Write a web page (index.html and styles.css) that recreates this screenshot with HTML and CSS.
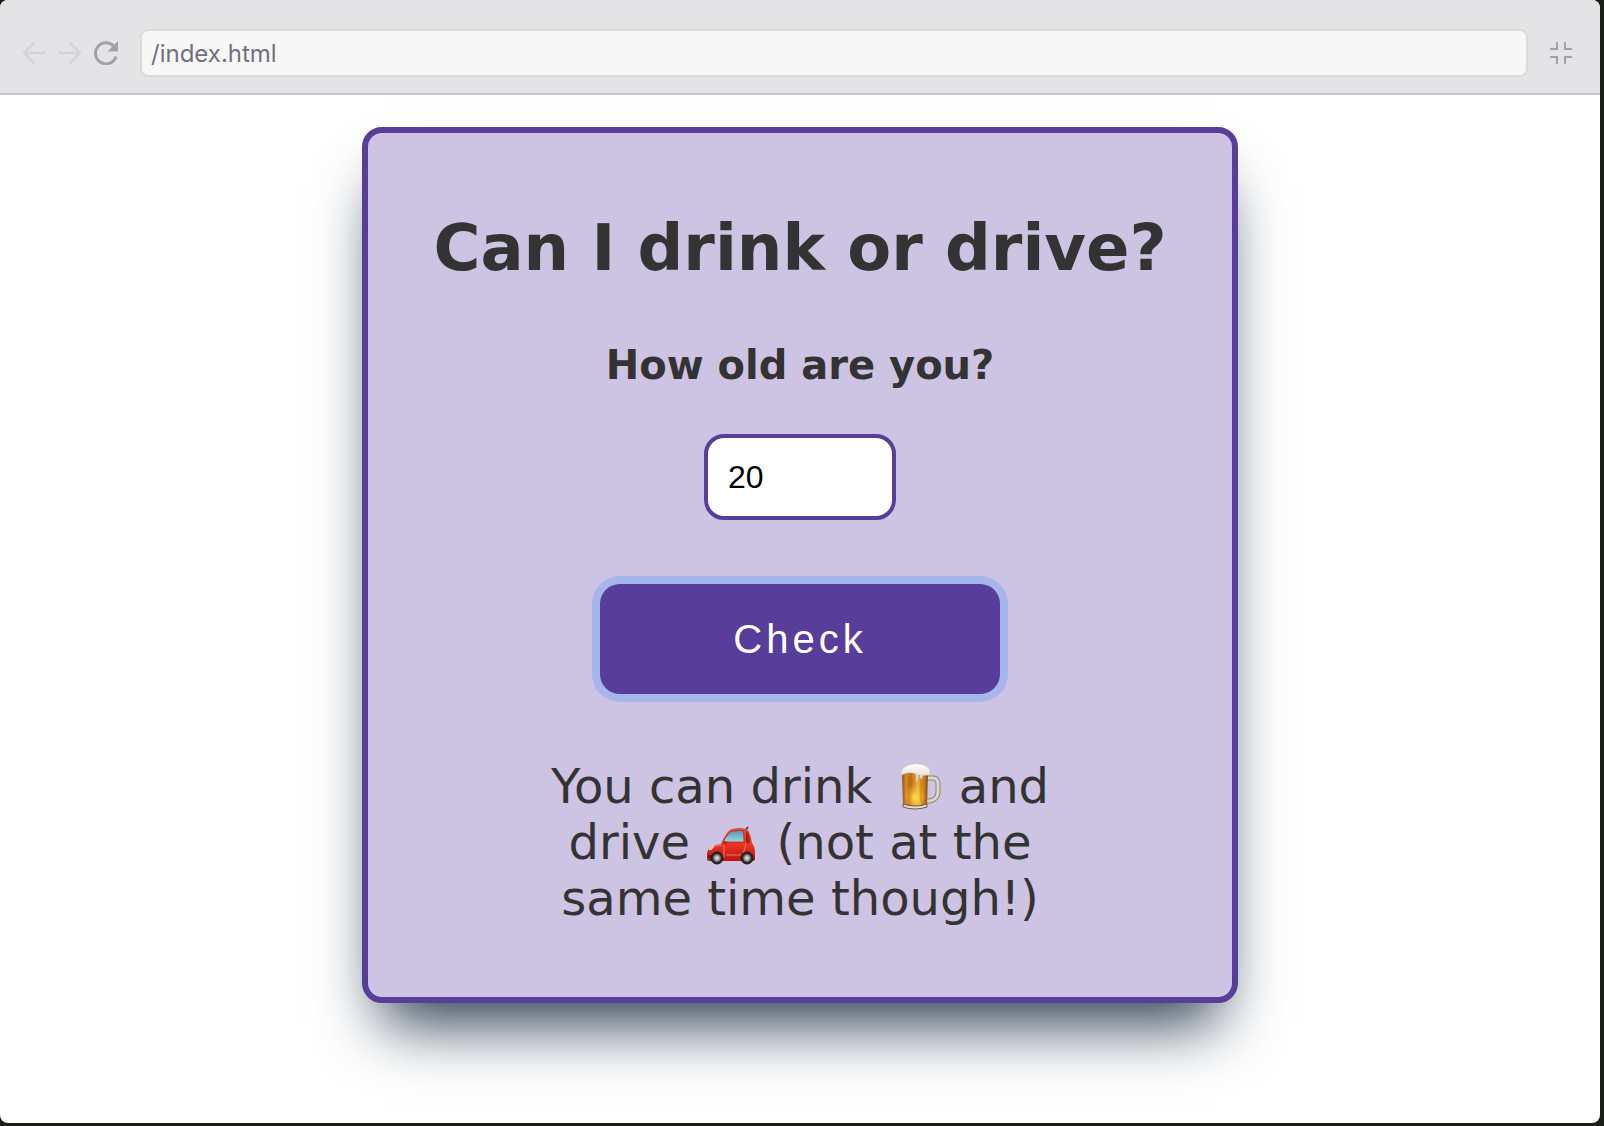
FILE: index.html
```html
<!DOCTYPE html>
<html lang="en">
<head>
  <meta charset="utf-8">
  <meta name="viewport" content="width=device-width, initial-scale=1">
  <title>Can I drink or drive?</title>
  <link rel="stylesheet" href="styles.css">
</head>
<body>
  <div class="window">
    <header class="toolbar">
      <div class="nav">
        <button class="icon-button faint" type="button" aria-label="Back">
          <svg width="24" height="24" viewBox="0 0 24 24" fill="none" stroke="currentColor" stroke-width="2.500"><path d="M24 12H2M12.500 1.500 2 12l10.500 10.500"/></svg>
        </button>
        <button class="icon-button faint" type="button" aria-label="Forward">
          <svg width="24" height="24" viewBox="0 0 24 24" fill="none" stroke="currentColor" stroke-width="2.500"><path d="M0 12h22M11.500 1.500 22 12 11.500 22.500"/></svg>
        </button>
        <button class="icon-button" type="button" aria-label="Reload">
          <svg width="24" height="24" viewBox="0 0 24 24"><path d="M19.500 5A10.500 10.500 0 1 0 22 15.500" fill="none" stroke="currentColor" stroke-width="3"/><path d="M24 0v10.500H13.500z" fill="currentColor"/></svg>
        </button>
      </div>
      <input class="address" type="text" value="/index.html" aria-label="Address">
      <button class="icon-button" type="button" aria-label="Exit full screen">
        <svg width="22" height="22" viewBox="0 0 22 22" fill="none" stroke="currentColor" stroke-width="2"><path d="M0 7h7V0M15 0v7h7M0 15h7v7M22 15h-7v7"/></svg>
      </button>
    </header>
    <main class="page">
      <form class="card">
        <h1 class="title">Can I drink or drive?</h1>
        <label class="question" for="age">How old are you?</label>
        <input class="age" id="age" type="text" inputmode="numeric" value="20">
        <button class="check" type="button">Check</button>
        <p class="result">You can drink
          <svg class="emoji" role="img" aria-label="beer" viewBox="-10 0 56 48">
            <defs>
              <linearGradient id="beer" x1="0" x2="1"><stop offset="0" stop-color="#8a5012"/><stop offset=".15" stop-color="#d88a26"/><stop offset=".35" stop-color="#b96c16"/><stop offset=".6" stop-color="#f0b23a"/><stop offset=".85" stop-color="#c97c1c"/><stop offset="1" stop-color="#7c4a14"/></linearGradient>
              <radialGradient id="glow" cy=".7"><stop offset="0" stop-color="#ffe04a"/><stop offset="1" stop-color="#ffc030" stop-opacity="0"/></radialGradient>
              <linearGradient id="foam" x2="0" y2="1"><stop offset="0" stop-color="#fff"/><stop offset="1" stop-color="#dcd3c6"/></linearGradient>
            </defs>
            <path d="M30 15h6q5 0 5 6v8q0 7-8 9h-3" fill="none" stroke="#8d8478" stroke-width="5"/>
            <path d="M30 15h6q5 0 5 6v8q0 7-8 9h-3" fill="none" stroke="#ddd6c8" stroke-width="3"/>
            <path d="M5 10h26l-1 33q-11 4-24 0z" fill="url(#beer)"/>
            <ellipse cx="18" cy="29" rx="11" ry="14" fill="url(#glow)"/>
            <path d="M12 13v26M24 13v26" stroke="#9b5a12" stroke-opacity=".4"/>
            <path d="M6 41q12 4 24 0v3q-12 4-24 0z" fill="#e8dfcf" stroke="#6e5a43"/>
            <path d="M4 9Q5 4 12 2q9-3 17 1 5 3 4 8-2 2-4 1-1 1-3 0l-1 3q-1 2-2 0v-3h-2v5q-1 3-2 0v-6Q11 8 5 12q-2-1-1-3z" fill="url(#foam)" stroke="#c6bbaa" stroke-width=".5"/>
          </svg>
          and drive
          <svg class="emoji" role="img" aria-label="car" viewBox="-2 -2 56 48">
            <defs>
              <linearGradient id="paint" x2="0" y2="1"><stop offset="0" stop-color="#f24a35"/><stop offset=".5" stop-color="#ed3325"/><stop offset="1" stop-color="#b81511"/></linearGradient>
              <linearGradient id="glass" x2="0" y2="1"><stop offset="0" stop-color="#5597ad"/><stop offset="1" stop-color="#9bd4df"/></linearGradient>
            </defs>
            <path d="m38 10 3-4" stroke="#333" stroke-width="1.500"/>
            <path d="M14 23Q20 9 25 8q8-2 14 0 4 1 6 14 3 4 3 10v6q0 2-3 2H2q-2 0-2-3v-5q1-7 14-9z" fill="url(#paint)"/>
            <path d="M16 21q5-10 10-11l10-1q1 4 1 12z" fill="url(#glass)" stroke="#9d2018" stroke-width=".7"/>
            <path d="M39 10q3 0 4 12h-4z" fill="#a92017"/>
            <path d="M17 22v15M39 22l-3 12H19M3 28q6-4 12-4" fill="none" stroke="#ff8b73" stroke-width=".8"/>
            <circle cx="18" cy="22" r="2" fill="#d51d16"/>
            <path d="m2 28 5-4q-1 6-5 5z" fill="#ffdbce"/>
            <path d="M1 34h5v3H1z" fill="#711812"/>
            <g fill="#292928" stroke="#171717"><circle cx="10" cy="37" r="6"/><circle cx="40" cy="37" r="6"/></g>
            <g fill="#aaa" stroke="#666"><circle cx="10" cy="37" r="3.500"/><circle cx="40" cy="37" r="3.500"/></g>
            <g fill="#ddd"><circle cx="10" cy="37" r="1.500"/><circle cx="40" cy="37" r="1.500"/></g>
          </svg>
          (not at the same time though!)</p>
      </form>
    </main>
  </div>
</body>
</html>
```

FILE: styles.css
```css
* {
  box-sizing: border-box;
}

body {
  display: flex;
  min-height: 100vh;
  margin: 0;
  padding: 0 4px 3px 0;
  background: #1c1f17;
}

.window {
  display: flex;
  flex: 1;
  flex-direction: column;
  min-width: 0;
  overflow: hidden;
  border-radius: 8px;
  background: #fff;
}

.toolbar {
  display: flex;
  align-items: center;
  gap: 22px;
  padding: 29px 28px 16px 22px;
  border-bottom: 2px solid #c8c8cc;
  background: #e4e4e6;
}

.nav {
  display: flex;
  gap: 12px;
}

.icon-button {
  display: flex;
  padding: 0;
  border: 0;
  background: none;
  color: #a1a1aa;
}

.icon-button.faint {
  color: #d2d2d7;
}

.address {
  flex: 1;
  min-width: 0;
  height: 48px;
  padding: 0 9px;
  border: 2px solid #dadadc;
  border-radius: 8px;
  background: #f7f7f7;
  color: #71717a;
  font: 24px Inter, sans-serif;
}

.page {
  display: flex;
  justify-content: center;
  align-items: flex-start;
  padding: 32px 16px;
}

.card {
  display: flex;
  flex-direction: column;
  align-items: center;
  width: 100%;
  max-width: 876px;
  padding: 75px 32px 71px;
  border: 6px solid #583d9b;
  border-radius: 20px;
  background: #ccc4e2;
  box-shadow: 0 40px 60px -20px #26394d;
  color: #333;
  font-family: Verdana, "DejaVu Sans", sans-serif;
  text-align: center;
}

.title {
  margin: 0 0 53px;
  font-size: 64px;
  line-height: 80px;
}

.question {
  margin-bottom: 45px;
  font-size: 40px;
  font-weight: bold;
  line-height: 48px;
}

.age {
  width: 192px;
  height: 86px;
  margin-bottom: 64px;
  padding: 0 20px;
  border: 4px solid #583d9b;
  border-radius: 20px;
  background: #fff;
  color: #000;
  font: 32px "Liberation Sans", sans-serif;
}

.check {
  width: 400px;
  max-width: 100%;
  height: 110px;
  margin-bottom: 64px;
  border: 0;
  border-radius: 20px;
  background: #583d9b;
  box-shadow: 0 0 0 8px #a6b5eb;
  color: #fff;
  font: 40px "Liberation Sans", sans-serif;
  letter-spacing: 4px;
}

.result {
  max-width: 520px;
  margin: 0;
  font-size: 48px;
  line-height: 56px;
}

.emoji {
  width: 56px;
  height: 48px;
  vertical-align: -8px;
}
```
